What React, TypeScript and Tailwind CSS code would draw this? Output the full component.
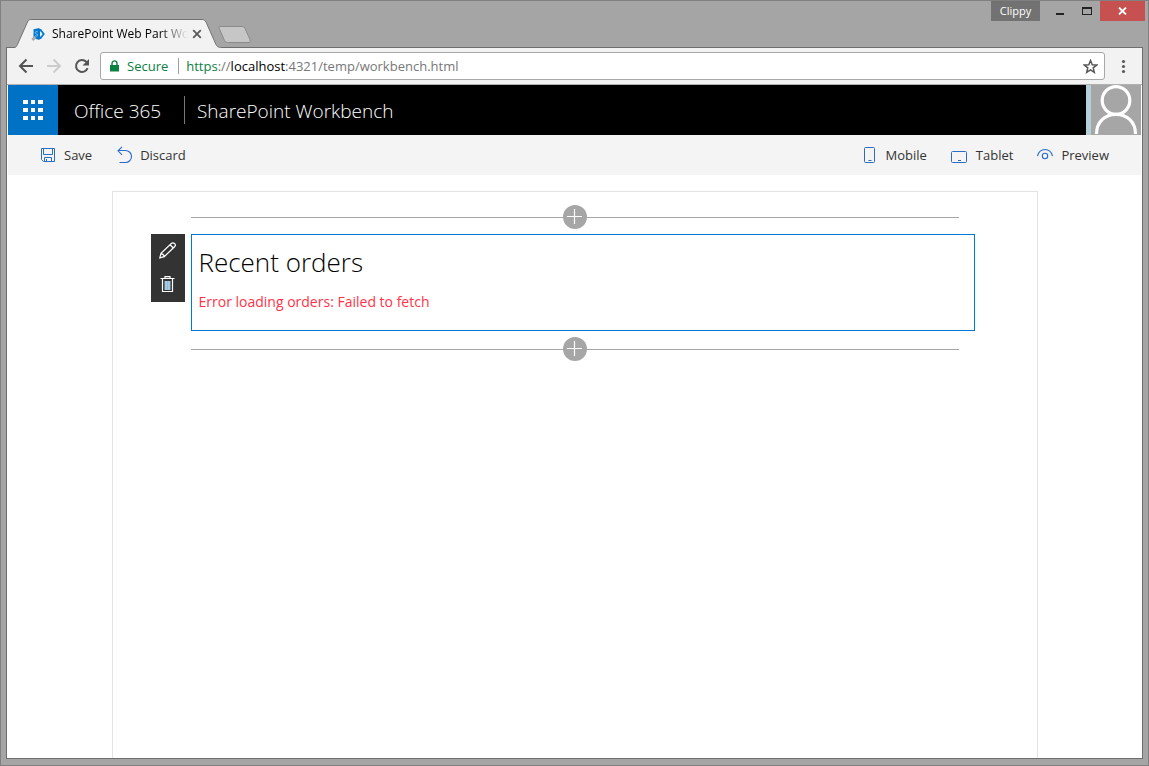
import type { ReactNode } from 'react';

function TabStrip() {
  return (
    <div className="relative z-10 flex h-[47px] items-start pr-[3px] pl-[5px]">
      <div className="relative mt-[18px] ml-[8px] h-[30px] w-[208px] shrink-0">
        <svg className="absolute inset-0" width="208" height="30" viewBox="0 0 208 30" aria-hidden="true">
          <path d="M0 28.5 C2 28.5 2.6 27.4 3.4 25.6 L13.5 3 C14 1.4 15 .5 17 .5 H188 C190 .5 191 1.4 192 3 L202 25.6 C203 27.6 204 28.5 208 28.5 V30 H0Z" fill="#f2f2f2" />
          <path d="M0 28.5 C2 28.5 2.6 27.4 3.4 25.6 L13.5 3 C14 1.4 15 .5 17 .5 H188 C190 .5 191 1.4 192 3 L202 25.6 C203 27.6 204 28.5 208 28.5" fill="none" stroke="#737373" />
        </svg>
        <div className="relative flex h-[30px] items-center pl-[17px]">
          <svg width="14" height="14" viewBox="0 0 14 14" aria-hidden="true">
            <path d="M8 2h2L13.800 7 10 12H8Z" fill="#0078d0" />
            <path d="M9 4.600h.8L11.600 7 9.800 9.400H9Z" fill="#e4f1fb" />
            <path d="M2.500 2.200 8.500 1v12L2.500 11.200Z" fill="#0078d0" />
            <path d="M6.800 5C5.800 4.300 4.200 4.500 4.200 5.700c0 1.300 2.500 1 2.500 2.400C6.700 9.300 5 9.400 4.100 8.700" fill="none" stroke="#8cc4ee" />
            <path d="M1.200 12.800 4.600 10.200" stroke="#aaa" strokeWidth="2.800" />
          </svg>
          <span className="ml-[7px] w-[136px] text-[12px] whitespace-nowrap text-black [mask-image:linear-gradient(to_right,#000_108px,transparent_136px)]">
            SharePoint Web Part Wo
          </span>
          <button aria-label="Close tab" className="ml-[4px] shrink-0">
            <svg width="10" height="10" viewBox="0 0 10 10" aria-hidden="true">
              <path d="M1.200 1.200 8.800 8.800M8.800 1.200 1.200 8.800" stroke="#5a5a5a" strokeWidth="1.800" />
            </svg>
          </button>
        </div>
      </div>
      <button aria-label="New tab" className="-ml-[6px] mt-[24px] shrink-0">
        <svg width="36" height="18" viewBox="0 0 36 18" aria-hidden="true">
          <path d="M4 1.500H26.500Q28 1.500 28.800 3L34 14.500Q35 17.500 33 17.500H11.500Q9.500 17.500 8.500 15.500L3 3Q2.500 1.500 4 1.500Z" fill="#c6c6c6" stroke="#8a8a8a" />
        </svg>
      </button>
      <div className="ml-auto flex h-[20px] items-stretch">
        <button className="w-[49px] bg-[#727272] text-[11px] leading-[20px] text-white">Clippy</button>
        <button aria-label="Minimize" className="ml-[6px] flex w-[27px] items-center justify-center">
          <svg width="10" height="14" viewBox="0 0 10 14" aria-hidden="true"><path d="M1 9h8v2H1Z" fill="#222" /></svg>
        </button>
        <button aria-label="Maximize" className="flex w-[27px] items-center justify-center">
          <svg width="10" height="8" viewBox="0 0 10 8" aria-hidden="true"><path d="M0 0h10v8H0ZM1 2v5h8V2Z" fill="#222" fillRule="evenodd" /></svg>
        </button>
        <button aria-label="Close window" className="flex w-[45px] items-center justify-center bg-[#c75050]">
          <svg width="9" height="8" viewBox="0 0 9 8" aria-hidden="true"><path d="M1 .500 8 7.500M8 .500 1 7.500" stroke="#fff" strokeWidth="1.800" /></svg>
        </button>
      </div>
    </div>
  );
}

function AddressBar() {
  return (
    <div className="flex h-[37px] items-center border-b border-[#b0b0b0] bg-[#f2f2f2] pr-[13px] pl-[11px]">
      <button aria-label="Back">
        <svg width="16" height="16" viewBox="0 0 16 16" aria-hidden="true"><path d="M15 8H2.500M8.500 1.500 2 8l6.500 6.500" fill="none" stroke="#555" strokeWidth="2" /></svg>
      </button>
      <button aria-label="Forward" className="ml-[12px]">
        <svg width="16" height="16" viewBox="0 0 16 16" aria-hidden="true"><path d="M1 8h12.500M7.500 1.500 14 8l-6.500 6.500" fill="none" stroke="#ccc" strokeWidth="2" /></svg>
      </button>
      <button aria-label="Reload" className="ml-[12px]">
        <svg width="16" height="16" viewBox="0 0 16 16" aria-hidden="true">
          <path d="M13.600 10.200A6 6 0 1 1 12.300 3.800L14 5.500" fill="none" stroke="#555" strokeWidth="2" />
          <path d="M15 1v6.500H8.500Z" fill="#555" />
        </svg>
      </button>
      <div className="ml-[10px] flex h-[28px] flex-1 items-center rounded-[3px] border border-[#a8a8a8] bg-white pr-[6px] pl-[9px]">
        <svg width="9" height="12" viewBox="0 0 9 12" aria-hidden="true">
          <path d="M0 5h9v6.500H0Z" fill="#0b8043" />
          <path d="M2 5.500V3.400a2.500 2.500 0 0 1 5 0V5.500" fill="none" stroke="#0b8043" strokeWidth="1.400" />
        </svg>
        <span className="ml-[8px] pt-[2px] text-[13px] text-[#0b8043]">Secure</span>
        <span className="ml-[10px] h-[16px] w-px bg-[#a0a0a0]" />
        <div className="ml-[7px] flex-1 pt-[2px] text-[13px] whitespace-nowrap text-[#777]">
          <span className="text-[#0b8043]">https</span>://<span className="text-black">localhost</span>:4321/temp/workbench.html
        </div>
        <button aria-label="Bookmark this page">
          <svg width="15" height="15" viewBox="0 0 15 15" aria-hidden="true">
            <path d="M7.500 1.500 9.200 5.700 13.700 6 10.200 8.900 11.300 13.300 7.500 10.900 3.700 13.300 4.800 8.900 1.300 6 5.800 5.700Z" fill="none" stroke="#555" strokeWidth="1.500" />
          </svg>
        </button>
      </div>
      <button aria-label="Browser menu" className="ml-[12px] w-[12px]">
        <svg width="12" height="16" viewBox="0 0 12 16" aria-hidden="true" fill="#5a5a5a">
          <circle cx="6.500" cy="3.500" r="1.600" /><circle cx="6.500" cy="8.500" r="1.600" /><circle cx="6.500" cy="13.500" r="1.600" />
        </svg>
      </button>
    </div>
  );
}

function SuiteBar() {
  return (
    <header className="flex h-[50px] items-center bg-black text-[19px] font-light text-white">
      <button aria-label="App launcher" className="flex size-[50px] items-center justify-center bg-[#0072c6]">
        <svg width="20" height="20" viewBox="0 0 20 20" aria-hidden="true" fill="#fff">
          <path d="M0 0h5v4H0ZM8 0h4v4H8ZM15 0h5v4h-5ZM0 8h5v4H0ZM8 8h4v4H8ZM15 8h5v4h-5ZM0 16h5v4H0ZM8 16h4v4H8ZM15 16h5v4h-5Z" />
        </svg>
      </button>
      <a href="#office" className="ml-[16px] w-[90px] pt-[3px] whitespace-nowrap">Office 365</a>
      <span className="ml-[20px] h-[28px] w-px bg-[#777]" />
      <a href="#workbench" className="ml-[12px] pt-[3px] whitespace-nowrap">SharePoint Workbench</a>
      <button aria-label="Account" className="ml-auto h-[50px] border-l-[5px] border-[#b5cfdb] bg-[#a6a6a6]">
        <svg width="50" height="50" viewBox="0 0 50 50" aria-hidden="true" fill="none" stroke="#fff" strokeWidth="3.200">
          <circle cx="25" cy="15.500" r="13.800" />
          <path d="M5.500 49C5.500 37 14 29.400 25 29.400S44.500 37 44.500 49" />
        </svg>
      </button>
    </header>
  );
}

function Command({ icon, label }: { icon: ReactNode; label: string }) {
  return (
    <button className="flex items-center gap-[8px] text-[13px] whitespace-nowrap text-[#333]">
      {icon}
      <span className="pt-[2px]">{label}</span>
    </button>
  );
}

function CommandBar() {
  return (
    <div className="flex h-[40px] items-center justify-between bg-[#f4f4f4] pr-[32px] pl-[32px]">
      <div className="flex gap-[24px]">
        <Command
          label="Save"
          icon={
            <svg width="16" height="16" viewBox="0 0 16 16" aria-hidden="true" fill="none" stroke="#2b6cc4">
              <path d="M1.500 1.500h13v13h-11l-2-2ZM3.500 1.500v6h9v-6M4.500 14.500v-4h7v4M6.500 12v2.500" />
            </svg>
          }
        />
        <Command
          label="Discard"
          icon={
            <svg width="16" height="18" viewBox="0 0 16 18" aria-hidden="true" fill="none" stroke="#2b6cc4" strokeWidth="1.100">
              <path d="M6 .800 2 4.800l4 4M2 4.500H9.500a5.300 5.300 0 0 1 0 12H3.500" />
            </svg>
          }
        />
      </div>
      <div className="flex gap-[24px]">
        <Command
          label="Mobile"
          icon={
            <svg width="14" height="18" viewBox="0 0 14 18" aria-hidden="true" fill="none" stroke="#2b6cc4">
              <rect x=".5" y="1.500" width="10" height="15" rx="1" /><path d="M4.500 14.500h3" />
            </svg>
          }
        />
        <Command
          label="Tablet"
          icon={
            <svg width="17" height="16" viewBox="0 0 17 16" aria-hidden="true" fill="none" stroke="#2b6cc4">
              <rect x=".5" y="4.500" width="15" height="11" rx="1" /><path d="M7 13.500h3" />
            </svg>
          }
        />
        <Command
          label="Preview"
          icon={
            <svg width="16" height="16" viewBox="0 0 16 16" aria-hidden="true" fill="none" stroke="#2b6cc4" strokeWidth="1.100">
              <path d="M.5 9C1.500 5 4.500 2.500 8 2.500S14.500 5 15.500 9" /><circle cx="8" cy="9" r="2.700" />
            </svg>
          }
        />
      </div>
    </div>
  );
}

function AddZone() {
  return (
    <div className="mr-4 flex h-6 items-center">
      <span className="h-px flex-1 bg-[#a6a6a6]" />
      <button aria-label="Add a web part" className="flex size-6 items-center justify-center rounded-full bg-[#a6a6a6]">
        <svg width="16" height="16" viewBox="0 0 16 16" aria-hidden="true">
          <path d="M7.500 0v15M0 7.500h15" stroke="#fff" strokeWidth="1.200" />
        </svg>
      </button>
      <span className="h-px flex-1 bg-[#a6a6a6]" />
    </div>
  );
}

function WebPart() {
  return (
    <section className="mt-[5px] mb-[6px] -ml-[40px] flex items-start gap-[6px]">
      <div className="flex w-[34px] shrink-0 flex-col bg-[#333]">
        <button aria-label="Edit web part" className="flex h-[34px] items-center justify-center">
          <svg width="18" height="18" viewBox="0 0 18 18" aria-hidden="true" fill="none" stroke="#fff" strokeWidth="1.200">
            <path d="M.8 15.800 2 11.400 12.300 1.500Q13.900 .2 15.500 1.500T15.800 4.500L5.300 14.600ZM11 2.700l3.400 3.300M2 11.400Q4.500 12 5.300 14.600" />
          </svg>
        </button>
        <button aria-label="Delete web part" className="flex h-[34px] items-center justify-center">
          <svg width="16" height="18" viewBox="0 0 16 18" aria-hidden="true">
            <path d="M.5 2.500h14M5 2.500V.600h5v1.900M2.500 2.500v13h10v-13" fill="none" stroke="#fff" strokeWidth="1.200" />
            <path d="M4.500 5h6v9h-6Z" fill="#8fbcd8" /><path d="M6 5v9M9 5v9" stroke="#d3e2e8" strokeWidth=".7" />
          </svg>
        </button>
      </div>
      <div className="min-h-[97px] flex-1 border border-[#0078d7] px-[7px] pt-[8px]">
        <h1 className="text-[26px] leading-[38px] font-light text-black">Recent orders</h1>
        <p className="mt-[11px] text-[14px] leading-[20px] text-[#ff3348]">Error loading orders: Failed to fetch</p>
      </div>
    </section>
  );
}

export default function App() {
  return (
    <div className="flex min-h-screen flex-col border border-[#808080] bg-[#a5a5a5] pb-[6px] font-['Open_Sans','Noto_Sans',sans-serif]">
      <TabStrip />
      <main className="mx-[5px] -mt-px flex flex-1 flex-col border border-[#6e6e6e] bg-white">
        <AddressBar />
        <div className="flex flex-1 flex-col px-px">
          <SuiteBar />
          <CommandBar />
          <div className="mx-auto mt-4 w-full max-w-[926px] flex-1 border border-b-0 border-[#e3e3e3] pt-[13px] pr-[62px] pl-[78px]">
            <AddZone />
            <WebPart />
            <AddZone />
          </div>
        </div>
      </main>
    </div>
  );
}
